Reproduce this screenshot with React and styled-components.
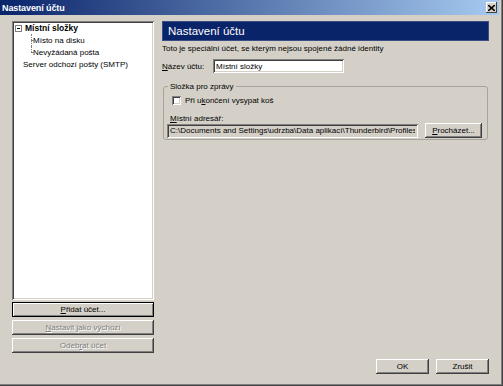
import React from "react";
import styled, { createGlobalStyle } from "styled-components";

const GlobalStyle = createGlobalStyle`
  html, body {
    margin: 0;
    padding: 0;
    background: #d4d0c8;
  }
  * {
    box-sizing: border-box;
  }
`;

function App() {
  return (
    <>
      <GlobalStyle />
      <Window>
        <TitleBar>
          <TitleText>Nastavení účtu</TitleText>
          <CloseButton>
            <svg width="7" height="6" viewBox="0 0 7 6">
              <path d="M0 0L7 6M7 0L0 6" stroke="#000" strokeWidth="1.6" />
            </svg>
          </CloseButton>
        </TitleBar>
        <Body>
          <LeftColumn>
            <Tree>
              <TreeRow>
                <Toggle>
                  <ToggleMinus />
                </Toggle>
                <BoldLabel>Místní složky</BoldLabel>
              </TreeRow>
              <TreeRow>
                <Branch last={false} />
                <span>Místo na disku</span>
              </TreeRow>
              <TreeRow>
                <Branch last />
                <span>Nevyžádaná pošta</span>
              </TreeRow>
              <TreeRow indent={9}>
                <span>Server odchozí pošty (SMTP)</span>
              </TreeRow>
            </Tree>
            <ButtonStack>
              <PushButton primary>
                <u>P</u>řidat účet...
              </PushButton>
              <PushButton disabled>
                <u>N</u>astavit jako výchozí
              </PushButton>
              <PushButton disabled>
                Odeb<u>r</u>at účet
              </PushButton>
            </ButtonStack>
          </LeftColumn>
          <RightColumn>
            <Header>Nastavení účtu</Header>
            <Description>
              Toto je speciální účet, se kterým nejsou spojené žádné identity
            </Description>
            <NameRow>
              <Label>
                <u>N</u>ázev účtu:
              </Label>
              <TextField width={131} readOnly value="Místní složky" />
            </NameRow>
            <GroupBox>
              <Legend>Složka pro zprávy</Legend>
              <CheckRow>
                <CheckBox />
                <Label>
                  Při u<u>k</u>ončení vysypat koš
                </Label>
              </CheckRow>
              <DirLabel>
                <u>M</u>ístní adresář:
              </DirLabel>
              <PathRow>
                <TextField
                  grey
                  width={251}
                  readOnly
                  value="C:\Documents and Settings\udrzba\Data aplikací\Thunderbird\Profiles"
                />
                <PushButton wide={57}>
                  <u>P</u>rocházet...
                </PushButton>
              </PathRow>
            </GroupBox>
            <Footer>
              <PushButton wide={53}>OK</PushButton>
              <PushButton wide={53}>Zrušit</PushButton>
            </Footer>
          </RightColumn>
        </Body>
      </Window>
    </>
  );
}

export default App;

const Window = styled.div`
  width: 503px;
  height: 386px;
  display: flex;
  flex-direction: column;
  background: #d4d0c8;
  padding: 0 4px 3px 0;
  box-shadow: inset -1px -1px #404040, inset -2px -2px #808080;
  font-family: "Liberation Sans", Arial, sans-serif;
  font-size: 8px;
  color: #000;
`;

const TitleBar = styled.div`
  height: 15px;
  display: flex;
  align-items: center;
  justify-content: space-between;
  padding: 0 2px 0 2px;
  background: linear-gradient(to right, #0a246a, #a6caf0);
`;

const TitleText = styled.span`
  color: #fff;
  font-weight: bold;
  font-size: 9px;
  letter-spacing: -0.1px;
`;

const CloseButton = styled.div`
  width: 11px;
  height: 11px;
  display: flex;
  align-items: center;
  justify-content: center;
  background: #d4d0c8;
  box-shadow: inset -1px -1px #404040, inset 1px 1px #fff;
`;

const Body = styled.div`
  flex: 1;
  display: flex;
  gap: 8px;
  padding: 6px 10px 9px 12px;
`;

const LeftColumn = styled.div`
  width: 142px;
  display: flex;
  flex-direction: column;
  gap: 2px;
  padding-bottom: 21px;
`;

const Tree = styled.div`
  flex: 1;
  background: #fff;
  padding-top: 1px;
  box-shadow: inset 1px 1px #808080, inset -1px -1px #fff,
    inset 2px 2px #404040, inset -2px -2px #d4d0c8;
  padding-left: 2px;
`;

const TreeRow = styled.div`
  height: 12px;
  display: flex;
  align-items: center;
  padding-left: ${(p) => p.indent || 0}px;
  white-space: nowrap;
`;

const Toggle = styled.span`
  width: 7px;
  height: 7px;
  margin: 0 3px 0 1px;
  border: 1px solid #808080;
  display: flex;
  align-items: center;
  justify-content: center;
  background: #fff;
`;

const ToggleMinus = styled.span`
  width: 3px;
  height: 1px;
  background: #000;
`;

const BoldLabel = styled.span`
  font-weight: bold;
  font-size: 8.5px;
`;

const Branch = styled.span`
  align-self: stretch;
  width: 19px;
  position: relative;
  &::before {
    content: "";
    position: absolute;
    left: 17px;
    top: 0;
    height: ${(p) => (p.last ? "6px" : "12px")};
    border-left: 1px dotted #808080;
  }
  &::after {
    content: "";
    position: absolute;
    left: 17px;
    top: 6px;
    width: 2px;
    border-top: 1px dotted #808080;
  }
`;

const ButtonStack = styled.div`
  display: flex;
  flex-direction: column;
  gap: 3px;
`;

const PushButton = styled.button`
  height: 15px;
  width: ${(p) => (p.wide ? `${p.wide}px` : "auto")};
  padding: 0;
  border: none;
  background: #d4d0c8;
  font-family: "Liberation Sans", Arial, sans-serif;
  font-size: 8px;
  color: ${(p) => (p.disabled ? "#808080" : "#000")};
  text-shadow: ${(p) => (p.disabled ? "1px 1px #fff" : "none")};
  box-shadow: ${(p) =>
    p.primary
      ? "inset 0 0 0 1px #000, inset 2px 2px #fff, inset -2px -2px #808080"
      : "inset -1px -1px #404040, inset 1px 1px #fff, inset -2px -2px #808080"};
  flex-shrink: 0;
`;

const RightColumn = styled.div`
  flex: 1;
  display: flex;
  flex-direction: column;
`;

const Header = styled.div`
  height: 20px;
  display: flex;
  align-items: center;
  padding-left: 6px;
  background: #0a246a;
  color: #fff;
  font-size: 11.5px;
  box-shadow: inset 0 0 0 1px #3a4e84;
`;

const Description = styled.div`
  margin-top: 3px;
  line-height: 10px;
`;

const NameRow = styled.div`
  display: flex;
  align-items: center;
  margin-top: 5px;
`;

const Label = styled.span`
  white-space: nowrap;
  ${NameRow} & {
    width: 51px;
  }
`;

const TextField = styled.input`
  width: ${(p) => p.width}px;
  height: 14px;
  padding: 0 3px;
  border: none;
  outline: none;
  font-family: "Liberation Sans", Arial, sans-serif;
  font-size: 8px;
  color: #000;
  background: ${(p) => (p.grey ? "#d4d0c8" : "#fff")};
  box-shadow: inset 1px 1px #808080, inset -1px -1px #fff,
    inset 2px 2px #404040, inset -2px -2px #d4d0c8;
`;

const GroupBox = styled.fieldset`
  margin: 9px 1px 0 1px;
  padding: 1px 5px 4px 3px;
  border: 1px solid #a8a49c;
  border-radius: 3px;
  height: 58px;
`;

const Legend = styled.legend`
  padding: 0 2px;
  margin-left: 1px;
  line-height: 9px;
`;

const CheckRow = styled.div`
  display: flex;
  align-items: center;
  gap: 4px;
  padding-left: 5px;
  margin-top: 3px;
  height: 11px;
`;

const CheckBox = styled.span`
  width: 9px;
  height: 9px;
  background: #fff;
  box-shadow: inset 1px 1px #808080, inset -1px -1px #fff,
    inset 2px 2px #404040, inset -2px -2px #d4d0c8;
`;

const DirLabel = styled.div`
  margin-top: 8px;
  padding-left: 3px;
  line-height: 10px;
`;

const PathRow = styled.div`
  display: flex;
  align-items: center;
  gap: 7px;
  margin-top: -1px;
`;

const Footer = styled.div`
  margin-top: auto;
  display: flex;
  justify-content: flex-end;
  gap: 7px;
`;
